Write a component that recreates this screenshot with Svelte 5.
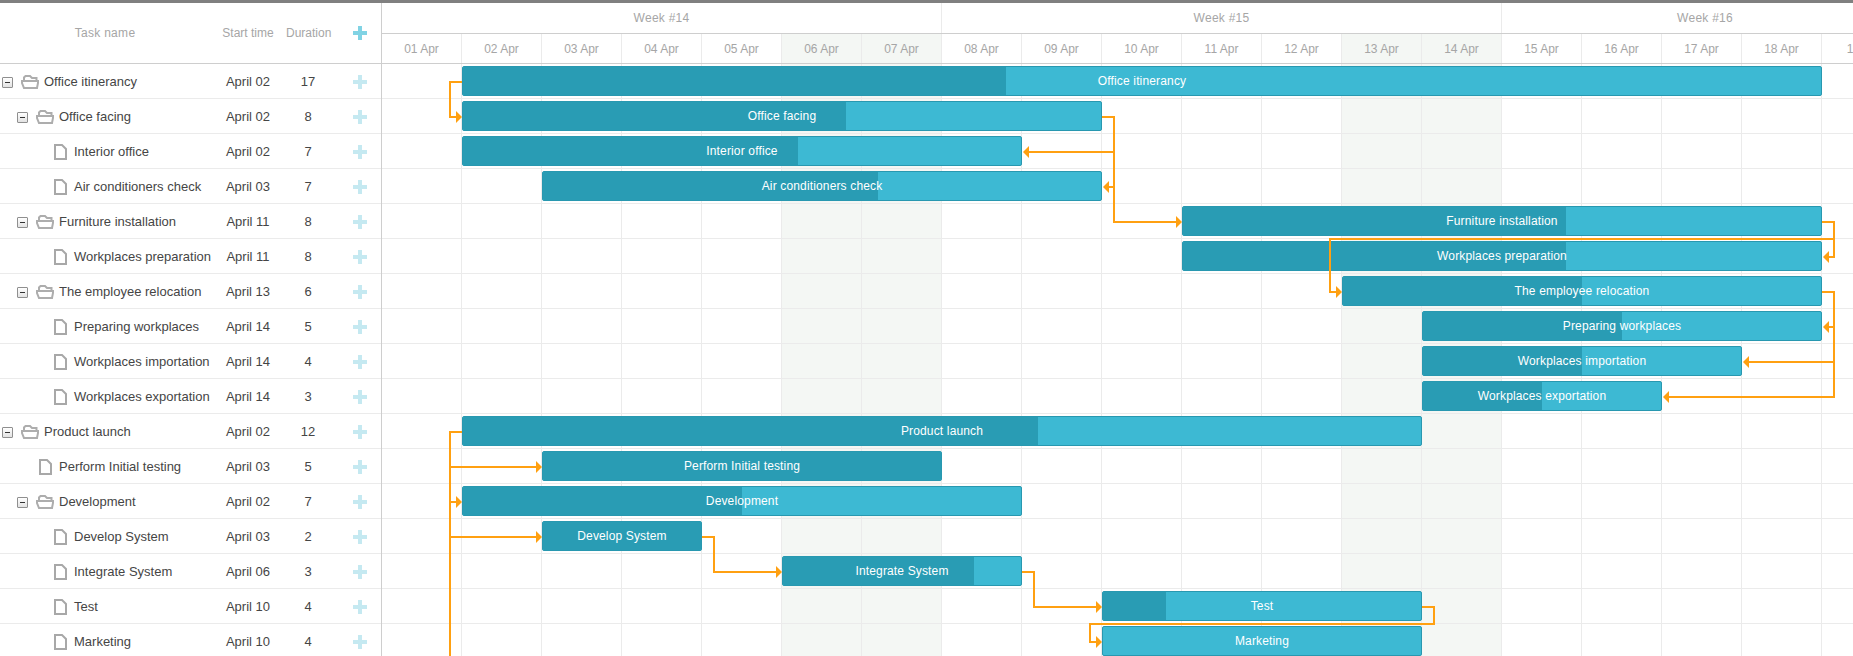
<script>
  const DAY = 80;
  const ROW = 35;
  const days = Array.from({ length: 19 }, (_, i) => ({
    label: String(i + 1).padStart(2, '0') + ' Apr',
    weekend: i === 5 || i === 6 || i === 12 || i === 13,
    last: i === 18
  }));
  const weeks = [
    { label: 'Week #14', cls: 'w7' },
    { label: 'Week #15', cls: 'w7' },
    { label: 'Week #16', cls: 'wrest' }
  ];
  const tasks = [
    { name: 'Office itinerancy', start: 'April 02', d0: 1, dur: 17, p: 0.4, level: 0, folder: true },
    { name: 'Office facing', start: 'April 02', d0: 1, dur: 8, p: 0.6, level: 1, folder: true },
    { name: 'Interior office', start: 'April 02', d0: 1, dur: 7, p: 0.6, level: 2 },
    { name: 'Air conditioners check', start: 'April 03', d0: 2, dur: 7, p: 0.6, level: 2 },
    { name: 'Furniture installation', start: 'April 11', d0: 10, dur: 8, p: 0.6, level: 1, folder: true },
    { name: 'Workplaces preparation', start: 'April 11', d0: 10, dur: 8, p: 0.6, level: 2 },
    { name: 'The employee relocation', start: 'April 13', d0: 12, dur: 6, p: 0.5, level: 1, folder: true },
    { name: 'Preparing workplaces', start: 'April 14', d0: 13, dur: 5, p: 0.5, level: 2 },
    { name: 'Workplaces importation', start: 'April 14', d0: 13, dur: 4, p: 0.5, level: 2 },
    { name: 'Workplaces exportation', start: 'April 14', d0: 13, dur: 3, p: 0.5, level: 2 },
    { name: 'Product launch', start: 'April 02', d0: 1, dur: 12, p: 0.6, level: 0, folder: true },
    { name: 'Perform Initial testing', start: 'April 03', d0: 2, dur: 5, p: 1, level: 1 },
    { name: 'Development', start: 'April 02', d0: 1, dur: 7, p: 0.5, level: 1, folder: true },
    { name: 'Develop System', start: 'April 03', d0: 2, dur: 2, p: 1, level: 2 },
    { name: 'Integrate System', start: 'April 06', d0: 5, dur: 3, p: 0.8, level: 2 },
    { name: 'Test', start: 'April 10', d0: 9, dur: 4, p: 0.2, level: 2 },
    { name: 'Marketing', start: 'April 10', d0: 9, dur: 4, p: 0, level: 2 }
  ];
  const links = [
    'M80 18H68V53H75',
    'M720 53H732V158H795',
    'M732 88H646',
    'M732 123H726',
    'M1440 158H1452V193H1446',
    'M1452 175H948V228H955',
    'M1440 228H1452V333H1286',
    'M1452 263H1446',
    'M1452 298H1366',
    'M80 368H68V600',
    'M68 403H155',
    'M68 438H75',
    'M68 473H155',
    'M320 473H332V508H395',
    'M640 508H652V543H715',
    'M1040 543H1052V560H708V578H715'
  ];
  const arrowsRight = [[80, 53], [800, 158], [960, 228], [160, 403], [80, 438], [160, 473], [400, 508], [720, 543], [720, 578]];
  const arrowsLeft = [[641, 88], [721, 123], [1441, 193], [1441, 263], [1361, 298], [1281, 333]];
</script>

<div class="page">
  <div class="topbar"></div>
  <div class="gantt">
    <section class="grid">
      <div class="grid-head">
        <div class="c-name title">Task name</div>
        <div class="c-start">Start time</div>
        <div class="c-dur">Duration</div>
        <div class="c-add">
          <svg class="plus head" width="14" height="14" viewBox="0 0 14 14"><path d="M5 0h4v5h5v4H9v5H5V9H0V5h5z" /></svg>
        </div>
      </div>
      {#each tasks as t}
        <div class="grid-row">
          <div class="c-name tree">
            <span class="indent level{t.level}"></span>
            <span class="toggle-slot">
              {#if t.folder}<span class="toggle"><span class="minus"></span></span>{/if}
            </span>
            <span class="icon-slot">
              {#if t.folder}
                <svg width="18" height="14" viewBox="0 0 18 14" fill="none" stroke="#adadad" stroke-width="2">
                  <path d="M3 6V2.5L4.5 1H9L11 3H15.5V6" />
                  <path d="M1 6H17V8L16 13H3L1 8Z" />
                </svg>
              {:else}
                <svg class="file" width="13" height="16" viewBox="0 0 13 16" fill="#fff" stroke="#a8a8a8" stroke-width="2">
                  <path d="M1 1H8L12 5V15H1Z" />
                </svg>
              {/if}
            </span>
            <span class="label">{t.name}</span>
          </div>
          <div class="c-start">{t.start}</div>
          <div class="c-dur">{t.dur}</div>
          <div class="c-add">
            <svg class="plus" width="14" height="14" viewBox="0 0 14 14"><path d="M5 0h4v5h5v4H9v5H5V9H0V5h5z" /></svg>
          </div>
        </div>
      {/each}
    </section>

    <section class="timeline">
      <div class="scale weeks">
        {#each weeks as w}<div class="week {w.cls}">{w.label}</div>{/each}
      </div>
      <div class="scale dates">
        {#each days as d}<div class="date" class:weekend={d.weekend} class:last={d.last}>{d.label}</div>{/each}
      </div>
      <div class="data">
        {#each tasks as _}
          <div class="t-row">
            {#each days as d}<div class="cell" class:weekend={d.weekend}></div>{/each}
          </div>
        {/each}
        {#each tasks as t, i}
          <div class="bar" style="left:{t.d0 * DAY}px;top:{i * ROW + 2}px;width:{t.dur * DAY}px">
            {#if t.p > 0}<div class="progress" style="width:{t.dur * DAY * t.p - 1}px"></div>{/if}
            <div class="bar-text">{t.name}</div>
          </div>
        {/each}
        <svg class="links" width="1471" height="592" viewBox="0 0 1471 592">
          {#each links as d}<path {d} fill="none" stroke="#ffa011" stroke-width="2" shape-rendering="crispEdges" />{/each}
          {#each arrowsRight as [x, y]}<path d="M{x - 6} {y - 6}L{x} {y}L{x - 6} {y + 6}Z" fill="#ffa011" />{/each}
          {#each arrowsLeft as [x, y]}<path d="M{x + 6} {y - 6}L{x} {y}L{x + 6} {y + 6}Z" fill="#ffa011" />{/each}
        </svg>
      </div>
    </section>
  </div>
</div>

<style>
  :global(body) {
    margin: 0;
    background: #fff;
    overflow: hidden;
  }
  .page {
    width: 1853px;
    height: 656px;
    overflow: hidden;
    display: flex;
    flex-direction: column;
    font-family: "Liberation Sans", Arial, sans-serif;
    color: #454545;
    font-size: 13px;
  }
  .topbar {
    height: 3px;
    flex: none;
    background: #808080;
  }
  .gantt {
    flex: 1;
    min-height: 0;
    display: flex;
  }
  .grid {
    width: 382px;
    flex: none;
    box-sizing: border-box;
    border-right: 1px solid #cecece;
    overflow: hidden;
  }
  .grid-head,
  .grid-row {
    display: grid;
    grid-template-columns: 210px 76px 44px 1fr;
    align-items: center;
    box-sizing: border-box;
  }
  .grid-head {
    height: 61px;
    border-bottom: 1px solid #cecece;
    font-size: 12px;
    color: #a6a6a6;
    text-align: center;
  }
  .title {
    letter-spacing: 0.3px;
  }
  .grid-row {
    height: 35px;
    border-bottom: 1px solid #ebebeb;
    text-align: center;
    line-height: 36px;
  }
  .c-add {
    display: flex;
    padding-left: 23px;
  }
  .plus {
    fill: #c5e9f1;
    display: block;
  }
  .plus.head {
    fill: #81d3e4;
  }
  .tree {
    display: flex;
    align-items: center;
    text-align: left;
    white-space: nowrap;
  }
  .indent {
    flex: none;
  }
  .indent.level0 { width: 0; }
  .indent.level1 { width: 15px; }
  .indent.level2 { width: 30px; }
  .toggle-slot {
    width: 21px;
    flex: none;
    display: flex;
    padding-left: 2px;
    box-sizing: border-box;
  }
  .toggle {
    width: 11px;
    height: 11px;
    box-sizing: border-box;
    border: 1px solid #8f8f8f;
    border-radius: 1px;
    background: linear-gradient(#fff, #e2e2e2);
    display: flex;
    align-items: center;
    justify-content: center;
  }
  .minus {
    width: 5px;
    height: 1px;
    background: #333;
  }
  .icon-slot {
    width: 23px;
    flex: none;
    display: flex;
    align-items: center;
  }
  .icon-slot svg {
    display: block;
  }
  .file {
    margin-left: 3px;
  }
  .scale {
    display: flex;
    box-sizing: border-box;
    font-size: 12px;
    color: #a6a6a6;
    text-align: center;
  }
  .weeks {
    height: 31px;
    border-bottom: 1px solid #cecece;
    line-height: 31px;
    letter-spacing: 0.25px;
  }
  .dates {
    height: 30px;
    border-bottom: 1px solid #cecece;
    line-height: 31px;
  }
  .timeline {
    flex: 1;
    min-width: 0;
    overflow: hidden;
  }
  .week {
    box-sizing: border-box;
    border-right: 1px solid #ebebeb;
  }
  .w7 {
    width: 560px;
    flex: none;
  }
  .wrest {
    width: 406px;
    flex: none;
    border-right: 0;
  }
  .date,
  .cell {
    width: 80px;
    flex: none;
    box-sizing: border-box;
    border-right: 1px solid #ebebeb;
  }
  .date.last {
    padding-left: 5px;
  }
  .weekend {
    background: #f4f7f4;
  }
  .data {
    position: relative;
  }
  .t-row {
    display: flex;
    height: 35px;
    box-sizing: border-box;
    border-bottom: 1px solid #ebebeb;
  }
  .bar {
    position: absolute;
    height: 30px;
    box-sizing: border-box;
    background: #3db9d3;
    border: 1px solid #2898b0;
    border-radius: 2px;
    overflow: hidden;
  }
  .progress {
    position: absolute;
    left: 0;
    top: 0;
    bottom: 0;
    background: #299cb4;
  }
  .bar-text {
    position: relative;
    text-align: center;
    color: #fff;
    font-size: 12px;
    line-height: 29px;
    letter-spacing: 0.15px;
    white-space: nowrap;
  }
  .links {
    position: absolute;
    left: 0;
    top: 0;
    pointer-events: none;
  }
</style>
